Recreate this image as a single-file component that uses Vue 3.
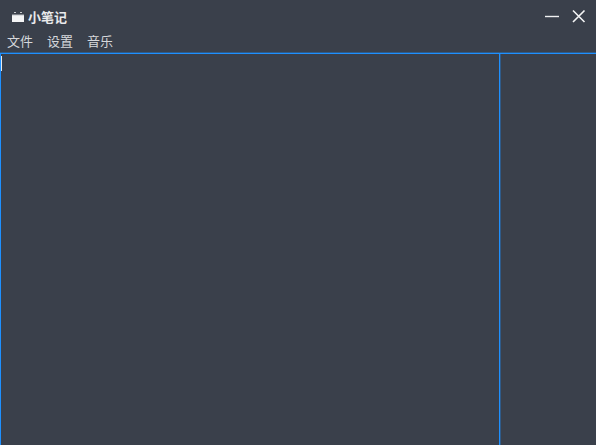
<script setup>
const menus = ['文件', '设置', '音乐']
</script>

<template>
  <div class="window">
    <header class="titlebar">
      <div class="brand">
        <svg class="logo" width="14" height="14" viewBox="0 0 14 14">
          <rect x="1" y="5" width="12" height="7" fill="#f4f5f6" />
          <rect x="3" y="2" width="2" height="1" fill="#c9ccd0" />
          <rect x="9" y="2" width="2" height="1" fill="#c9ccd0" />
          <path d="M1 5H13" stroke="#bfc3c8" stroke-width="1" fill="none" />
        </svg>
        <span class="title">小笔记</span>
      </div>
      <div class="controls">
        <svg width="14" height="14" viewBox="0 0 14 14">
          <path d="M0 7.5H14" stroke="#f0f1f2" stroke-width="1.4" fill="none" />
        </svg>
        <svg width="14" height="14" viewBox="0 0 14 14">
          <path d="M1 1.5L12.5 13M12.5 1.5L1 13" stroke="#f4f5f6" stroke-width="1.6" fill="none" />
        </svg>
      </div>
    </header>
    <nav class="menubar">
      <span v-for="m in menus" :key="m" class="menu">{{ m }}</span>
    </nav>
    <main class="panes">
      <div class="editor"><span class="caret"></span></div>
      <div class="side"></div>
    </main>
  </div>
</template>

<style scoped>
.window {
  width: 596px;
  height: 445px;
  display: flex;
  flex-direction: column;
  overflow: hidden;
  background: #3a404b;
  font-family: "Noto Sans CJK SC", "Liberation Sans", sans-serif;
}
.titlebar {
  height: 32px;
  display: flex;
  align-items: center;
  justify-content: space-between;
  padding: 2px 10px 0 11px;
  box-sizing: border-box;
}
.brand {
  display: flex;
  align-items: center;
  gap: 3px;
}
.logo {
  display: block;
}
.title {
  font-size: 13px;
  font-weight: 700;
  line-height: 18px;
  color: #e9eaec;
}
.controls {
  display: flex;
  align-items: center;
  gap: 13px;
  margin-top: -2px;
}
.controls svg {
  display: block;
}
.menubar {
  height: 21px;
  display: flex;
  align-items: flex-start;
  gap: 14px;
  padding-left: 7px;
}
.menu {
  font-size: 13px;
  line-height: 17px;
  color: #d6d8db;
}
.panes {
  flex: 1;
  display: flex;
  border-top: 1px solid #1e90ff;
  box-shadow: 0 -1px 0 rgba(30, 144, 255, 0.35);
}
.editor {
  width: 500px;
  box-sizing: border-box;
  border-left: 1px solid #1e90ff;
  border-right: 1px solid #1e90ff;
  padding-top: 2px;
  box-shadow: 1px 0 0 rgba(30, 144, 255, 0.35);
}
.caret {
  display: block;
  width: 1px;
  height: 15px;
  background: #e8eaec;
}
.side {
  flex: 1;
}
</style>
